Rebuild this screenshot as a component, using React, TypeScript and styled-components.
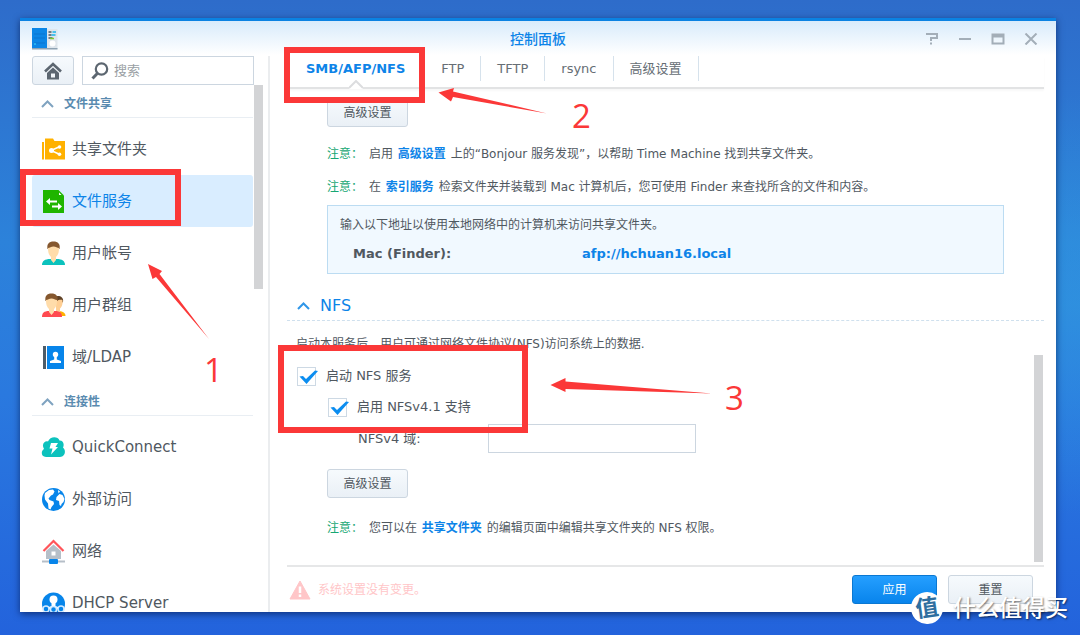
import React from "react";
import styled, { createGlobalStyle } from "styled-components";

const blue = "#0d84e8";
const red = "#fb3838";
const ink = "#50585f";

const GlobalStyle = createGlobalStyle`
  *, *::before, *::after { box-sizing: border-box; }
  body {
    margin: 0;
    color: ${ink};
    font-family: "DejaVu Sans", "Noto Sans CJK SC", sans-serif;
    font-size: 12px;
    line-height: 20px;
  }
  button, input { font: inherit; color: inherit; }
  a { text-decoration: none; }
`;

const Desktop = styled.div`
  position: relative;
  display: flex;
  height: 100vh;
  padding: 18px 24px 23px 20px;
  overflow: hidden;
  background:
    radial-gradient(ellipse at 100% 48%, rgba(50, 160, 225, 0.5), transparent 45%),
    linear-gradient(#2e6cca 0%, #2c82da 38%, #2a79df 62%, #2363dc 100%);
`;

const Window = styled.div`
  flex: 1;
  min-width: 0;
  display: flex;
  flex-direction: column;
  overflow: hidden;
  border-top: 3px solid #0b82e2;
  background: linear-gradient(#d8ebfb, #ffffff 34px);
  box-shadow: 0 2px 7px rgba(0, 20, 70, 0.65);
`;

const TitleBar = styled.header`
  display: grid;
  grid-template-columns: 1fr auto 1fr;
  align-items: center;
  height: 35px;
  padding: 0 12px;
`;

const Title = styled.h1`
  margin: 0;
  color: ${blue};
  font-size: 14px;
  font-weight: 500;
`;

const WindowControls = styled.div`
  display: flex;
  justify-content: flex-end;
  gap: 7px;
`;

const WindowControl = styled.button`
  display: grid;
  place-items: center;
  width: 26px;
  height: 26px;
  padding: 0;
  border: 0;
  background: none;
  color: #a3aeb8;
`;

const Body = styled.div`
  flex: 1;
  min-height: 0;
  display: flex;
`;

const Sidebar = styled.aside`
  flex: none;
  display: flex;
  flex-direction: column;
  width: 250px;
  padding-left: 12px;
  border-right: 2px solid #ebedef;
`;

const SidebarTools = styled.div`
  display: flex;
  gap: 8px;
  padding-right: 14px;
`;

const Button = styled.button<{ $primary?: boolean; $width: number }>`
  display: grid;
  place-items: center;
  width: ${(p) => p.$width}px;
  height: 29px;
  padding: 0;
  border: 1px solid ${(p) => (p.$primary ? "#0a78d2" : "#ccd6e0")};
  border-radius: 3px;
  background: ${(p) => (p.$primary ? "linear-gradient(#259fff, #0884ec)" : "linear-gradient(#f6fafd, #eaf0f6)")};
  color: ${(p) => (p.$primary ? "#ffffff" : ink)};
  line-height: 20px;
`;

const SearchBox = styled.label`
  flex: 1;
  min-width: 0;
  display: flex;
  align-items: center;
  gap: 5px;
  height: 29px;
  padding-left: 8px;
  border: 1px solid #ccd6e0;
  background: #ffffff;
`;

const SearchInput = styled.input`
  flex: 1;
  min-width: 0;
  padding: 0;
  border: 0;
  outline: 0;
  background: none;
  font-size: 13px;
  &::placeholder { color: #9a9fa4; opacity: 1; }
`;

const SidebarScroll = styled.nav`
  position: relative;
  flex: 1;
  min-height: 0;
  overflow: hidden;
  padding-right: 15px;
`;

const ScrollThumb = styled.div<{ $bottom?: boolean; $right: number; $length: number }>`
  position: absolute;
  right: ${(p) => p.$right}px;
  ${(p) => (p.$bottom ? "bottom: 3px" : "top: 0")};
  width: 9px;
  height: ${(p) => p.$length}px;
  background: #d3d4d6;
`;

const GroupHeader = styled.button`
  display: flex;
  align-items: center;
  gap: 10px;
  width: 100%;
  height: 33px;
  margin-bottom: 5px;
  padding: 5px 0 0 9px;
  border: 0;
  border-bottom: 1px solid #e9eef3;
  background: none;
  color: #5a8bb0;
  font-weight: 700;
`;

const NavItem = styled.a<{ $active?: boolean }>`
  display: flex;
  align-items: center;
  gap: 6px;
  height: 52px;
  padding-left: 9px;
  border-radius: 3px;
  background: ${(p) => (p.$active ? "#d9edff" : "transparent")};
  color: ${(p) => (p.$active ? blue : ink)};
  font-size: 15px;
`;

const Main = styled.main`
  flex: 1;
  min-width: 0;
  display: flex;
  flex-direction: column;
  padding: 0 12px 0 17px;
`;

const Tabs = styled.div`
  display: flex;
  flex: none;
  height: 33px;
  border-bottom: 2px solid #e2e3e4;
  box-shadow: 0 2px 2px rgba(0, 0, 0, 0.03);
`;

const Tab = styled.button<{ $active?: boolean }>`
  position: relative;
  height: 25px;
  padding: 0 ${(p) => (p.$active ? 19 : 16)}px;
  border: 0;
  border-right: 1px solid ${(p) => (p.$active ? "transparent" : "#d6e2ec")};
  background: none;
  color: ${(p) => (p.$active ? blue : "#666e75")};
  font-size: 13px;
  font-weight: ${(p) => (p.$active ? 700 : 400)};
`;

const Notch = styled.svg`
  position: absolute;
  left: 50%;
  top: 24px;
  margin-left: -7px;
`;

const Pane = styled.div`
  position: relative;
  flex: 1;
  min-height: 0;
  overflow: hidden;
  padding-top: 9px;
`;

const Indent = styled.div`
  padding: 0 40px;
`;

const Notes = styled.div<{ $top: number }>`
  display: grid;
  gap: 13px;
  padding-top: ${(p) => p.$top}px;
`;

const Note = styled.p`
  display: grid;
  grid-template-columns: 42px 1fr;
  margin: 0;
  white-space: nowrap;
`;

const NoteTag = styled.span`
  color: #17a773;
`;

const Link = styled.a`
  margin: 0 1px;
  color: ${blue};
  font-weight: 700;
`;

const InfoBox = styled.section`
  height: 69px;
  margin-top: 8px;
  padding: 9px 12px;
  border: 1px solid #bcdcf2;
  background: #f1f9ff;
`;

const InfoText = styled.p`
  margin: 0;
`;

const AddressTable = styled.table`
  margin: 9px 0 0 13px;
  border-collapse: collapse;
  font-size: 13px;
  font-weight: 700;
  th, td { padding: 0; text-align: left; }
  th { width: 229px; }
  a { color: ${blue}; }
`;

const SectionHeader = styled.h2`
  display: flex;
  align-items: center;
  gap: 10px;
  height: 30px;
  margin: 17px 0 13px;
  padding-left: 10px;
  border-bottom: 1px dashed #cfe0ee;
  color: ${blue};
  font-size: 16px;
  font-weight: 400;
`;

const Description = styled.p`
  margin: 0 0 12px;
  padding-left: 9px;
`;

const CheckLabel = styled.label<{ $nested?: boolean }>`
  display: flex;
  align-items: center;
  gap: 10px;
  height: 20px;
  margin-bottom: ${(p) => (p.$nested ? 7 : 11)}px;
  padding-left: ${(p) => (p.$nested ? 41 : 10)}px;
  font-size: 13px;
`;

const CheckFrame = styled.span`
  display: grid;
  width: 19px;
  height: 19px;
  > * { grid-area: 1 / 1; }
  svg { pointer-events: none; overflow: visible; }
`;

const CheckInput = styled.input`
  appearance: none;
  width: 19px;
  height: 19px;
  margin: 0;
  border: 1px solid #cdd9e4;
  background: #ffffff;
  &:not(:checked) + svg { visibility: hidden; }
`;

const Field = styled.div`
  display: grid;
  grid-template-columns: 130px 208px;
  align-items: center;
  margin-bottom: 16px;
  padding-left: 71px;
  font-size: 13px;
`;

const TextInput = styled.input`
  width: 100%;
  height: 29px;
  padding: 0 6px;
  border: 1px solid #ccd6e0;
  outline: 0;
  background: #ffffff;
`;

const Footer = styled.footer`
  flex: none;
  display: flex;
  align-items: center;
  gap: 11px;
  height: 47px;
  padding-right: 11px;
  border-top: 2px solid #e6e7e8;
`;

const Status = styled.p`
  flex: 1;
  display: flex;
  align-items: center;
  gap: 7px;
  margin: 0;
  padding-left: 2px;
  color: #ffc6c8;
`;

const Highlight = styled.div<{ $x: number; $y: number; $w: number; $h: number }>`
  position: absolute;
  left: ${(p) => p.$x}px;
  top: ${(p) => p.$y}px;
  width: ${(p) => p.$w}px;
  height: ${(p) => p.$h}px;
  border: 6px solid ${red};
  pointer-events: none;
`;

const Arrows = styled.svg`
  position: absolute;
  left: 0;
  top: 0;
  pointer-events: none;
`;

const StepNumber = styled.span<{ $x: number; $y: number }>`
  position: absolute;
  left: ${(p) => p.$x}px;
  top: ${(p) => p.$y}px;
  color: ${red};
  font-family: "Open Sans", sans-serif;
  font-size: 33px;
  line-height: 40px;
`;

const Watermark = styled.div`
  position: absolute;
  right: 12px;
  bottom: 11px;
  display: flex;
  align-items: center;
  gap: 10px;
  color: #ffffff;
  font-size: 23px;
  font-weight: 500;
  line-height: 32px;
  text-shadow: 1px 1px 2px rgba(0, 0, 0, 0.55);
`;

const WatermarkBadge = styled.span`
  width: 32px;
  height: 32px;
  border-radius: 50%;
  background: #ffffff;
  color: #2f6f9f;
  font-weight: 700;
  text-align: center;
  text-shadow: none;
  transform: rotate(-8deg);
`;

const Chevron = ({ color }: { color: string }) => (
  <svg width="13" height="8" viewBox="0 0 13 8" fill="none" stroke={color} strokeWidth="2">
    <path d="M1 7 6.500 1.500 12 7" />
  </svg>
);

const AppIcon = () => (
  <svg width="26" height="22" viewBox="0 0 26 22">
    <path d="M15 1h10.500v20H15z" fill="#dfe6ec" />
    <path d="M15 20h10.500v1.500H0V20z" fill="#8fa3b3" />
    <path d="M0 0h15v20H0z" fill="#0b86e6" />
    <path d="M2 6h11M2 10h11M2 15h11" stroke="#0a6fc4" strokeWidth=".7" />
    <path d="M2 16h2" stroke="#3cdcff" />
    <path d="M16.500 4h3M16.500 7h3M16.500 10h4" stroke="#4a5a66" strokeWidth="1.500" />
    <path d="M20.500 4h3.500M19.500 7h4" stroke="#18b4ec" strokeWidth="1.500" />
    <path d="M18 10.500h4" stroke="#7ec832" strokeWidth="1.500" />
    <circle cx="20.500" cy="15.500" r="3" fill="#ffffff" />
  </svg>
);

const HomeIcon = () => (
  <svg width="18" height="18" viewBox="0 0 18 18">
    <path d="M1 9.500 9 2l8 7.500" fill="none" stroke="#5c6670" strokeWidth="2.600" />
    <path d="M9 5.500 15 11v6.500H3V11z" fill="#5c6670" />
    <path d="M7 11.500h4v4H7z" fill="#f2f6fa" />
  </svg>
);

const SearchIcon = () => (
  <svg width="18" height="18" viewBox="0 0 18 18" fill="none" stroke="#5c6670">
    <circle cx="10.500" cy="7" r="5.700" strokeWidth="2.200" />
    <path d="M6.300 11.500 1.500 16.500" strokeWidth="3" />
  </svg>
);

const iconPaths: Record<string, React.ReactNode> = {
  share: (
    <>
      <path d="M1 5v17.500h2V5z" fill="#ffb100" />
      <path d="M4 1.500h8L13.500 4H24v18.500H4z" fill="#ffb100" />
      <path d="M19 9.500 10 13.500l9 4" fill="none" stroke="#fff" strokeWidth="1.500" />
      <circle cx="10.500" cy="13.500" r="2.500" fill="#fff" />
      <circle cx="18.500" cy="10" r="1.800" fill="#fff" />
      <circle cx="18.500" cy="17.200" r="1.800" fill="#fff" />
    </>
  ),
  files: (
    <>
      <path d="M2 1h15.500L23 6.500V24H2z" fill="#1fb500" />
      <path d="M18 3.500v2.500h2.500z" fill="#fff" />
      <path d="M5 12.500 9 9v2.500h7v2H9V16z" fill="#fff" />
      <path d="M21 17.500 17 14v2.500h-6v2h6V21z" fill="#fff" />
    </>
  ),
  user: (
    <>
      <path d="M1 24c0-4 3-6 8-6h7c5 0 8 2 8 6z" fill="#0cc2bd" />
      <path d="M6.500 8C5.500 3 8 .5 12.500.5S19.500 3 18.500 8z" fill="#85572e" />
      <path d="M7 7c2 0 3-1.500 5.500-1.500S16 7 18 7c0 5-1 7-3 9v3l-2.500 3-2.500-3v-3C8 14 7 12 7 7z" fill="#ffdcaa" />
    </>
  ),
  group: (
    <>
      <path d="M18 18c4 .5 6.500 2 6.500 5h-6z" fill="#ffb100" />
      <path d="M13 4c4-2 10-1 9 5l-3 2z" fill="#5f4126" />
      <path d="M15 8c3-1 4-1.500 6.500-1 .5 5-1 7-2.500 8.500V19h-4z" fill="#ffcf94" />
      <path d="M1 24c0-4 2-6 7-6h6c5 0 7 2 7 6z" fill="#ff4a50" />
      <path d="M4.500 8C3.500 3 6 .5 10.500.5S17.500 3 16.500 8z" fill="#85572e" />
      <path d="M5 7c2 0 3-1.500 5.500-1.500S14 7 16 7c0 5-1 7-3 9v3l-2.500 3L8 19v-3C6 14 5 12 5 7z" fill="#ffdcaa" />
    </>
  ),
  domain: (
    <>
      <path d="M2 1h3v23H2z" fill="#4d5c68" />
      <path d="M6 1h17v23H6z" fill="#0785ea" />
      <circle cx="14.500" cy="9.500" r="2.700" fill="#fff" />
      <path d="M13.200 11h2.600v3.500l4.200 1.500v2H9v-2l4.200-1.500z" fill="#fff" />
    </>
  ),
  quick: (
    <>
      <path d="M5 22C-.5 22 0 15.500 3 14 0 9 4 5.500 7 6.500 9 1 17 1 18.500 5.500c4 0 5 4 3.500 7 3.500 3 2 9.500-3 9.500z" fill="#0cc2bd" />
      <path d="M10 8h7l-2.500 4H17l-7 7.500 1.500-6H8.500z" fill="#fff" />
    </>
  ),
  globe: (
    <>
      <circle cx="12.500" cy="12.500" r="11.500" fill="#0785ea" />
      <path d="M4 6 8 3l4-.5 1.500 2-1.500 3-2 1-2.500 3 1 1.500 4 1.500.5 2.500-2.500 3-1 2.500-2-1-.5-5-3-4-.5-4z" fill="#fff" />
      <path d="m15.500 10 3-3 3 1 2 4-1 3-2 2-.5 2-1.500-1-.5-4-3-1z" fill="#fff" />
      <path d="m17 3 2 1.500-1.500 2z" fill="#fff" />
    </>
  ),
  network: (
    <>
      <path d="M5 12 12.500 5.500 20 12v8H5z" fill="#b6bfc8" />
      <path d="M10.500 12.500h4v4h-4z" fill="#fff" />
      <path d="M2.500 12 12.500 2l10 10" fill="none" stroke="#ff555a" strokeWidth="2.200" />
      <path d="M1 22.500h23" stroke="#b6bfc8" strokeWidth="2" />
      <rect x="8" y="20" width="9" height="5" rx="1" fill="#0785ea" />
    </>
  ),
  dhcp: (
    <>
      <circle cx="12.500" cy="13" r="11.500" fill="#0785ea" />
      <circle cx="12.500" cy="8.500" r="4" fill="#fff" />
      <path d="M10.500 11h4v4l5 2-7 3-7-3 5-2z" fill="#fff" />
      <g fill="#0785ea" stroke="#d4ebff" strokeWidth="1.500">
        <circle cx="5" cy="18" r="3" />
        <circle cx="12.500" cy="18.500" r="3" />
        <circle cx="20" cy="18" r="3" />
      </g>
    </>
  ),
};

const groups = [
  {
    name: "文件共享",
    items: [
      { icon: "share", label: "共享文件夹" },
      { icon: "files", label: "文件服务", active: true },
      { icon: "user", label: "用户帐号" },
      { icon: "group", label: "用户群组" },
      { icon: "domain", label: "域/LDAP" },
    ],
  },
  {
    name: "连接性",
    items: [
      { icon: "quick", label: "QuickConnect" },
      { icon: "globe", label: "外部访问" },
      { icon: "network", label: "网络" },
      { icon: "dhcp", label: "DHCP Server" },
    ],
  },
];

const tabs = ["SMB/AFP/NFS", "FTP", "TFTP", "rsync", "高级设置"];

const CheckBox = ({ label, nested }: { label: string; nested?: boolean }) => (
  <CheckLabel $nested={nested}>
    <CheckFrame>
      <CheckInput type="checkbox" defaultChecked />
      <svg width="19" height="19" viewBox="0 0 19 19">
        <path d="M2.500 9.500 6 9l3 3 9-8.500 3 .5L9.500 17z" fill="#0b8df0" />
      </svg>
    </CheckFrame>
    {label}
  </CheckLabel>
);

export default function App() {
  return (
    <Desktop>
      <GlobalStyle />
      <Window>
        <TitleBar>
          <AppIcon />
          <Title>控制面板</Title>
          <WindowControls>
            <WindowControl aria-label="帮助">
              <svg width="14" height="12" viewBox="0 0 14 12" fill="none" stroke="currentColor" strokeWidth="2">
                <path d="M1 1h11v4H6v3M6 9.500v2" />
              </svg>
            </WindowControl>
            <WindowControl aria-label="最小化">
              <svg width="14" height="12" viewBox="0 0 14 12" stroke="currentColor" strokeWidth="2">
                <path d="M1 6h12" />
              </svg>
            </WindowControl>
            <WindowControl aria-label="最大化">
              <svg width="14" height="12" viewBox="0 0 14 12" fill="none" stroke="currentColor">
                <path d="M1.500 1.500h11v9h-11z" strokeWidth="2" />
                <path d="M1 3h12" strokeWidth="3" />
              </svg>
            </WindowControl>
            <WindowControl aria-label="关闭">
              <svg width="14" height="12" viewBox="0 0 14 12" stroke="currentColor" strokeWidth="2">
                <path d="m1.500.5 11 11M12.500.5l-11 11" />
              </svg>
            </WindowControl>
          </WindowControls>
        </TitleBar>
        <Body>
          <Sidebar>
            <SidebarTools>
              <Button $width={42} aria-label="主页">
                <HomeIcon />
              </Button>
              <SearchBox>
                <SearchIcon />
                <SearchInput placeholder="搜索" aria-label="搜索" />
              </SearchBox>
            </SidebarTools>
            <SidebarScroll>
              {groups.map((group) => (
                <React.Fragment key={group.name}>
                  <GroupHeader>
                    <Chevron color="#7fa3c0" />
                    {group.name}
                  </GroupHeader>
                  {group.items.map((item) => (
                    <NavItem key={item.label} href="#" $active={"active" in item}>
                      <svg width="25" height="25" viewBox="0 0 25 25">
                        {iconPaths[item.icon]}
                      </svg>
                      {item.label}
                    </NavItem>
                  ))}
                </React.Fragment>
              ))}
              <ScrollThumb $right={5} $length={204} />
            </SidebarScroll>
          </Sidebar>
          <Main>
            <Tabs role="tablist">
              {tabs.map((name, i) => (
                <Tab key={name} role="tab" aria-selected={i === 0} $active={i === 0}>
                  {name}
                  {i === 0 && (
                    <Notch width="14" height="9" viewBox="0 0 14 9">
                      <path d="M0 9V8L7 1l7 7v1z" fill="#ffffff" />
                      <path d="M0 8 7 1l7 7" fill="none" stroke="#dcdddf" strokeWidth="2" />
                    </Notch>
                  )}
                </Tab>
              ))}
            </Tabs>
            <Pane>
              <Indent>
                <Button $width={81}>高级设置</Button>
                <Notes $top={17}>
                  <Note>
                    <NoteTag>注意：</NoteTag>
                    <span>
                      启用 <Link href="#">高级设置</Link> 上的“Bonjour 服务发现”，以帮助 Time Machine 找到共享文件夹。
                    </span>
                  </Note>
                  <Note>
                    <NoteTag>注意：</NoteTag>
                    <span>
                      在 <Link href="#">索引服务</Link> 检索文件夹并装载到 Mac 计算机后，您可使用 Finder 来查找所含的文件和内容。
                    </span>
                  </Note>
                </Notes>
                <InfoBox>
                  <InfoText>输入以下地址以使用本地网络中的计算机来访问共享文件夹。</InfoText>
                  <AddressTable>
                    <tbody>
                      <tr>
                        <th scope="row">Mac (Finder):</th>
                        <td>
                          <a href="#">afp://hchuan16.local</a>
                        </td>
                      </tr>
                    </tbody>
                  </AddressTable>
                </InfoBox>
              </Indent>
              <SectionHeader>
                <Chevron color="#2f96e8" />
                NFS
              </SectionHeader>
              <Description>启动本服务后，用户可通过网络文件协议(NFS)访问系统上的数据.</Description>
              <CheckBox label="启动 NFS 服务" />
              <CheckBox label="启用 NFSv4.1 支持" nested />
              <Field>
                <label htmlFor="nfs-domain">NFSv4 域:</label>
                <TextInput id="nfs-domain" type="text" />
              </Field>
              <Indent>
                <Button $width={81}>高级设置</Button>
                <Notes $top={20}>
                  <Note>
                    <NoteTag>注意：</NoteTag>
                    <span>
                      您可以在 <Link href="#">共享文件夹</Link> 的编辑页面中编辑共享文件夹的 NFS 权限。
                    </span>
                  </Note>
                </Notes>
              </Indent>
              <ScrollThumb $bottom $right={1} $length={207} />
            </Pane>
            <Footer>
              <Status>
                <svg width="22" height="20" viewBox="0 0 22 20">
                  <path d="M11 1 21 19H1z" fill="#ffc6c8" stroke="#ffc6c8" strokeLinejoin="round" />
                  <path d="M11 6.500v6.500M11 14.500v2.500" stroke="#ffffff" strokeWidth="2.500" />
                </svg>
                系统设置没有变更。
              </Status>
              <Button $primary $width={85}>
                应用
              </Button>
              <Button $width={85}>重置</Button>
            </Footer>
          </Main>
        </Body>
      </Window>
      <Highlight $x={20} $y={169} $w={161} $h={57} />
      <Highlight $x={284} $y={47} $w={141} $h={56} />
      <Highlight $x={278} $y={345} $w={250} $h={88} />
      <Arrows width="760" height="420" viewBox="0 0 760 420" fill={red}>
        <path d="M148 264 162 271 159.500 274 209 339 156 277 152.500 279z" />
        <path d="M438.500 92.500 454 88 453 91.500 547 113.500 453 97 451 101.500z" />
        <path d="M550.500 385 565.500 378V381.500L712 393.500 565.500 389V392z" />
      </Arrows>
      <StepNumber $x={204} $y={350}>1</StepNumber>
      <StepNumber $x={572} $y={96}>2</StepNumber>
      <StepNumber $x={725} $y={378}>3</StepNumber>
      <Watermark>
        <WatermarkBadge>值</WatermarkBadge>
        什么值得买
      </Watermark>
    </Desktop>
  );
}
